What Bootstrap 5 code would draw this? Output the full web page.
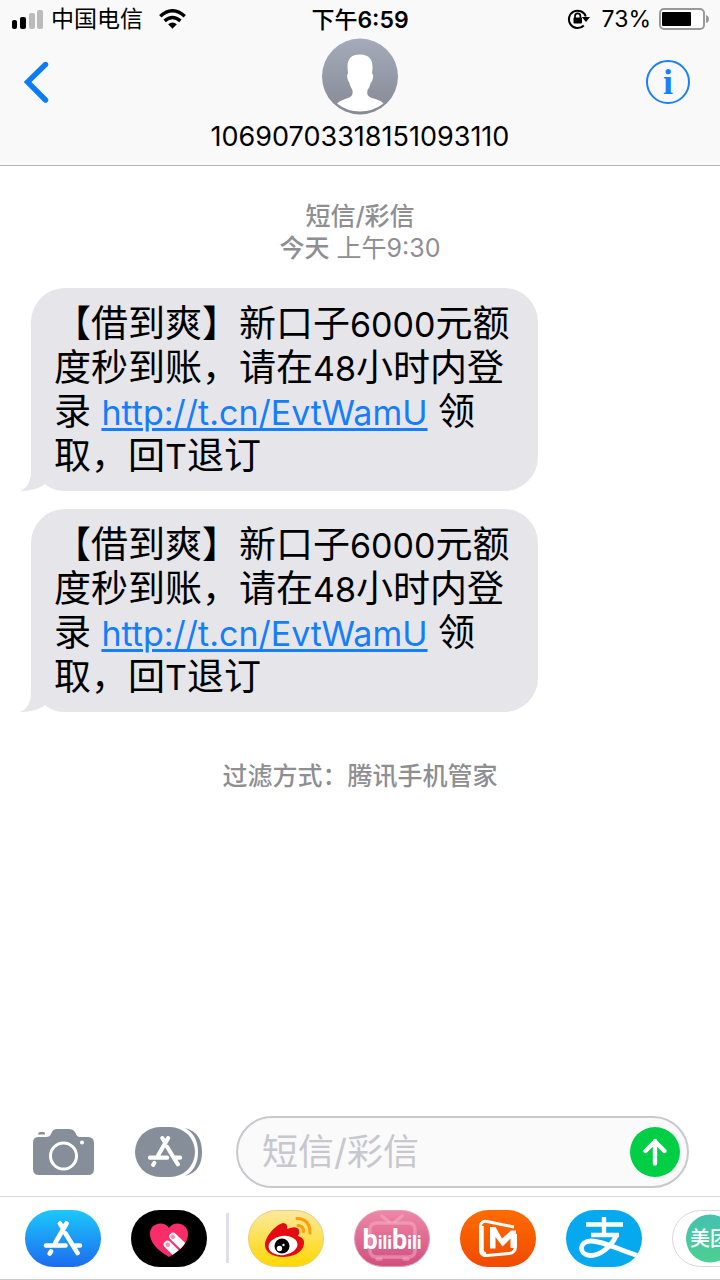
<!DOCTYPE html>
<html lang="zh-CN">
<head>
<meta charset="utf-8">
<meta name="viewport" content="width=device-width, initial-scale=1">
<title>短信</title>
<link rel="stylesheet" href="https://cdn.jsdelivr.net/npm/bootstrap@5.3.0/dist/css/bootstrap.min.css">
<style>
  body { font-family: Inter, "Noto Sans CJK SC", sans-serif; color: #000; background: #fff; }
  svg { display: block; flex: none; }
  .bare-btn { border: 0; background: none; padding: 0; flex: none; }
  .top-bar { background: #f9f9f9; border-bottom: 1px solid #b2b2b2; }
  .status-row { height: 38px; padding: 0 11px; font-size: 23px; line-height: 40px; }
  .status-row > * { flex: 1 1 0; }
  .clock { font-weight: 600; }
  .clock-cjk { font-weight: 500; }
  .nav-row { height: 127px; padding: 0 24px; }
  .nav-side { flex: 1 1 0; padding-top: 22px; }
  .info-btn { width: 44px; height: 44px; margin-right: 6px; border: 2px solid #1a80f5; border-radius: 50%; color: #1a80f5; font: 700 36px/40px "Liberation Serif", serif; }
  .sender { font-size: 27px; line-height: 32px; margin: 6px -40px 0; font-weight: 400; }
  .gray-note { color: #8e8e93; font-size: 25px; line-height: 32px; }
  .medium-text { font-weight: 500; }
  .thread { padding: 34px 31px 0; }
  .bubbles { gap: 18px; }
  .bubble { position: relative; width: 507px; max-width: 100%; background: #e5e5ea; border-radius: 34px; padding: 14px 24px 13px 23px; font-size: 37px; line-height: 44px; }
  .bubble .western { font-size: 34px; line-height: 1; }
  .bubble a { color: #157efb; text-decoration: underline; text-decoration-thickness: 3px; text-underline-offset: 3px; }
  .tail { position: absolute; left: -11px; bottom: 0; }
  .compose { padding: 0 31px 8px 32px; }
  .apps-btn { margin-left: 40px; }
  .field { min-width: 0; height: 72px; border: 2px solid #c8c8cd; border-radius: 36px; background: #fafafa; padding: 0 7px 0 24px; margin-left: 33px; }
  .field input { width: 0; min-width: 0; border: 0; outline: 0; background: none; font-size: 36px; padding: 0; font-weight: 400; }
  .field input::placeholder { color: #c7c7cd; opacity: 1; }
  .app-strip { border-top: 1px solid #dcdcde; border-bottom: 1px solid #ccc; height: 84px; padding-left: 25px; gap: 30px; overflow: hidden; }
  .strip-rule { width: 3px; height: 50px; background: #dfdfea; margin: 0 -11px; flex: none; }
</style>
</head>
<body>
<svg width="0" height="0" class="position-absolute" aria-hidden="true">
  <defs>
    <symbol id="appstore" viewBox="0 0 40 36">
      <g fill="none" stroke="currentColor" stroke-width="4.6" stroke-linecap="round">
        <path d="M17 3.5 20.400 9M23.500 3.500 12.500 22.500M22.500 13.500 34.500 33M3 25.500H22.500M31.500 25.500H37M8 31.500 6.700 33.600"/>
      </g>
    </symbol>
    <linearGradient id="gAvatar" x2="0" y2="1"><stop stop-color="#a5abba"/><stop offset="1" stop-color="#858994"/></linearGradient>
    <linearGradient id="gStore" x2="0" y2="1"><stop stop-color="#1cc8fb"/><stop offset="1" stop-color="#1d6bf0"/></linearGradient>
    <linearGradient id="gWeibo" x2="0" y2="1"><stop stop-color="#fbe9a0"/><stop offset="1" stop-color="#ffd800"/></linearGradient>
    <linearGradient id="gBili" x2="0" y2="1"><stop stop-color="#ef87a8"/><stop offset="1" stop-color="#d04f7c"/></linearGradient>
    <linearGradient id="gMango" x2="0" y2="1"><stop stop-color="#ff6b00"/><stop offset="1" stop-color="#f04a00"/></linearGradient>
    <linearGradient id="gMeituan" x2="0" y2="1"><stop stop-color="#45c1b0"/><stop offset="1" stop-color="#4cd092"/></linearGradient>
    <clipPath id="pill"><rect width="76" height="57" rx="28.500"/></clipPath>
    <clipPath id="heart"><path d="M38 47Q19 36 19 23.500C19 13 33 10 38 18C43 10 57 13 57 24Q57 36 38 47Z"/></clipPath>
  </defs>
</svg>

<div class="d-flex flex-column min-vh-100">
  <header class="top-bar">
    <div class="status-row d-flex">
      <div class="d-flex align-items-center">
        <svg width="32" height="20" viewBox="0 0 32 20"><rect x="1" y="11" width="5" height="9" rx="2"/><rect x="9" y="8" width="6" height="12" rx="2"/><g fill="#bbb"><rect x="18" y="4" width="6" height="16" rx="2"/><rect x="26" y="1" width="6" height="19" rx="2"/></g></svg>
        <span class="ms-2">中国电信</span>
        <svg class="ms-3" width="27" height="20" viewBox="0 0 28 20"><g fill="none" stroke="#000" stroke-width="3.600"><path d="M1.300 7.200Q14-4.200 26.700 7.200"/><path d="M5.800 12Q14 4.800 22.200 12"/></g><path d="M9.500 15.400Q14 11.600 18.500 15.400L14 20Z"/></svg>
      </div>
      <div class="clock text-center"><span class="clock-cjk">下午</span>6:59</div>
      <div class="d-flex align-items-center justify-content-end">
        <svg width="23" height="22" viewBox="0 0 23 22"><path d="M16.800 17.500A8.700 8.700 0 1 1 18.800 8.500" fill="none" stroke="#000" stroke-width="2"/><path d="M14.800 9H23L19 14Z"/><rect x="6.500" y="9.500" width="8.500" height="6" rx="1"/><path d="M8 10V8a2.700 2.700 0 0 1 5.400 0v2" fill="none" stroke="#000" stroke-width="1.700"/></svg>
        <span class="ms-2 ps-1">73%</span>
        <svg class="ms-2" width="50" height="22" viewBox="0 0 50 22"><rect x="1" y="1" width="44" height="20" rx="4" fill="#fff" stroke="#999" stroke-width="2"/><rect x="3" y="4" width="29" height="14" rx="1"/><path d="M47 7q3 1 3 4t-3 4z" fill="#999"/></svg>
      </div>
    </div>
    <div class="nav-row d-flex">
      <div class="nav-side">
        <button class="bare-btn" type="button" aria-label="返回"><svg width="26" height="44" viewBox="0 0 26 44"><path d="M21.500 4.500 3.500 22 21.500 40" fill="none" stroke="#0a7cfa" stroke-width="5.400" stroke-linecap="round" stroke-linejoin="miter"/></svg></button>
      </div>
      <div class="d-flex flex-column align-items-center">
        <svg width="76" height="77" viewBox="0 0 76 76"><circle cx="38" cy="38" r="38" fill="url(#gAvatar)"/><path d="M38 16C47 16 51 21 50.500 30L50 35Q52 36 50.800 40Q50 44 48.700 44C48 49 46 50 45.500 52C44.500 56 46 58 50 59.500C55 61 59 62 61.500 65Q51 73 38 73T15 65C18 62 22 61 26 59.500C30 58 31 56 30.500 52C30 50 28 48 27.300 44Q26 43 25.500 40Q24.500 36 26 35L25.500 29C25.500 20 29 16 38 16Z" fill="#fff"/></svg>
        <h1 class="sender">10690703318151093110</h1>
      </div>
      <div class="nav-side text-end">
        <button class="bare-btn info-btn text-center" type="button" aria-label="详细信息">i</button>
      </div>
    </div>
  </header>

  <main class="thread flex-grow-1">
    <div class="gray-note text-center"><div class="medium-text">短信/彩信</div><div><span class="medium-text">今天</span> 上午9:30</div></div>
    <div class="bubbles d-flex flex-column mt-4">
      <div class="bubble">【借到爽】新口子<span class="western">6000</span>元额度秒到账，请在<span class="western">48</span>小时内登录 <a class="western" href="#">http://t.cn/EvtWamU</a> 领取，回<span class="western">T</span>退订
        <svg class="tail" width="26" height="34" viewBox="0 0 26 34"><path d="M11 0V15C11 25 7 31 0 34Q14 34 24 28L26 10Z" fill="#e5e5ea"/></svg></div>
      <div class="bubble">【借到爽】新口子<span class="western">6000</span>元额度秒到账，请在<span class="western">48</span>小时内登录 <a class="western" href="#">http://t.cn/EvtWamU</a> 领取，回<span class="western">T</span>退订
        <svg class="tail" width="26" height="34" viewBox="0 0 26 34"><path d="M11 0V15C11 25 7 31 0 34Q14 34 24 28L26 10Z" fill="#e5e5ea"/></svg></div>
    </div>
    <p class="gray-note medium-text text-center mt-5 mb-0">过滤方式：腾讯手机管家</p>
  </main>

  <footer>
    <div class="compose d-flex align-items-center">
      <button class="bare-btn" type="button" aria-label="相机"><svg width="63" height="48" viewBox="0 0 63 48"><path fill="#868e99" d="M6 9H14Q18 9 19 6L20 4Q21 1 25 1H37Q41 1 43 4L44 6Q45 9 48 9H56Q62 9 62 15V41Q62 47 56 47H7Q1 47 1 41V15Q1 9 6 9ZM8 4H12Q13 4 13 6.500H6Q6 4 8 4Z"/><circle cx="31.500" cy="28" r="13" fill="none" stroke="#fff" stroke-width="3"/><circle cx="50" cy="14.500" r="2" fill="#fff"/></svg></button>
      <button class="bare-btn apps-btn" type="button" aria-label="应用"><svg width="68" height="50" viewBox="0 0 68 50"><rect width="60" height="50" rx="25" fill="#868e99"/><path d="M50 1C63 4 67 14 67 25S63 46 50 49Q63 42 63 25T50 1Z" fill="#868e99"/><svg x="12" y="8" width="36" height="32" color="#fff"><use href="#appstore"/></svg></svg></button>
      <div class="field d-flex align-items-center flex-grow-1">
        <input class="flex-grow-1" type="text" placeholder="短信/彩信" aria-label="短信/彩信">
        <button class="bare-btn" type="button" aria-label="发送"><svg width="50" height="50" viewBox="0 0 50 50"><circle cx="25" cy="25" r="25" fill="#00ce44"/><path d="M25 36.500V14M15.500 24 25 14.500 34.500 24" fill="none" stroke="#fff" stroke-width="4.400" stroke-linecap="round" stroke-linejoin="round"/></svg></button>
      </div>
    </div>
    <nav class="app-strip d-flex align-items-center" aria-label="应用">
      <button class="bare-btn" type="button" aria-label="App Store"><svg width="76" height="57"><rect width="76" height="57" rx="28.500" fill="url(#gStore)"/><svg x="18" y="10" width="40" height="36" color="#fff"><use href="#appstore"/></svg></svg></button>
      <button class="bare-btn" type="button" aria-label="Digital Touch"><svg width="76" height="57"><rect width="76" height="57" rx="28.500"/><g clip-path="url(#heart)"><rect width="76" height="57" fill="#fb2c6a"/><g stroke="#fff" stroke-width="7.500" stroke-linecap="round"><path d="M42 26.500 58 42M36.500 34.500 50 48"/></g><g stroke="#ff8fa8" stroke-width="4" stroke-linecap="round"><path d="M41.500 26.500 42 27M36.500 34.500 37 35"/></g></g></svg></button>
      <span class="strip-rule"></span>
      <button class="bare-btn" type="button" aria-label="微博"><svg width="76" height="57"><rect x=".5" y=".5" width="75" height="56" rx="28" fill="url(#gWeibo)" stroke="#e6cf7a"/><path d="M17 35C17 27 27 15 35 13Q40 13 39 19Q49 15 51 20Q52 23 50 26Q57 28 56 34C55 43 44 47 35 47S17 43 17 35Z" fill="#e50b12"/><ellipse cx="35" cy="35.500" rx="14.500" ry="9.500" fill="#fff" transform="rotate(-8 35 35.500)"/><circle cx="34" cy="36" r="7.500"/><circle cx="31.500" cy="38.500" r="2.700" fill="#fff"/><circle cx="35.500" cy="35" r="1.200" fill="#fff"/><g fill="none" stroke="#ff9c08" stroke-width="3" stroke-linecap="round"><path d="M49 8.500Q62 9 62 23"/><path d="M50 15.500Q56 16 55.500 21.500"/></g></svg></button>
      <button class="bare-btn" type="button" aria-label="哔哩哔哩"><svg width="76" height="57"><rect x=".5" y=".5" width="75" height="56" rx="28" fill="url(#gBili)" stroke="#e0a0b8"/><g fill="none" stroke="#f5b2c7" stroke-opacity=".5" stroke-width="3.500" stroke-linecap="round"><rect x="16" y="13" width="45" height="34" rx="6"/><path d="M28 6 35 12M48 6 41 12M23 49h4M50 49h4"/></g><text x="38" y="39" text-anchor="middle" font-family="Roboto, sans-serif" font-weight="700" font-size="18" fill="#fff"><tspan font-size="27">b</tspan>ili<tspan font-size="27">b</tspan>ili</text></svg></button>
      <button class="bare-btn" type="button" aria-label="芒果TV"><svg width="76" height="57"><rect width="76" height="57" rx="28.500" fill="url(#gMango)"/><g fill="none" stroke="#fff" stroke-linejoin="round"><path d="M54 17 27 11.500Q20.500 10.500 20.500 17V39Q20.500 46 27 45.500L49 43.500Q55.500 43 55.500 36V24" stroke-width="3"/><path d="M21.500 16V40Q21.500 44 26 44.500" stroke-width="4.500"/></g><path d="M30 17H35.500L42 28.500 51 20.500H56V38H50.500V28.500L42.500 36.500 35.500 27V38.500H30Z" fill="#fff"/></svg></button>
      <button class="bare-btn" type="button" aria-label="支付宝"><svg width="76" height="57"><g clip-path="url(#pill)"><rect width="76" height="57" fill="#07a9ee"/><g fill="none" stroke="#fff" stroke-width="4.400"><path d="M38 7V26M20 14.500H57M25 25H53"/><path d="M50.500 25C46 36 34 46 24 45.500C12 44.500 13 31 25 31C38 31 52 40 73 46" stroke-width="4.800"/></g></g></svg></button>
      <button class="bare-btn" type="button" aria-label="美团"><svg width="76" height="57"><rect x=".5" y=".5" width="75" height="56" rx="28" fill="#fff" stroke="#d8d8d8"/><circle cx="38" cy="28.500" r="24" fill="url(#gMeituan)"/><text x="38" y="36" text-anchor="middle" font-size="20" font-weight="500" fill="#fff">美团</text></svg></button>
    </nav>
  </footer>
</div>
<script src="https://cdn.jsdelivr.net/npm/bootstrap@5.3.0/dist/js/bootstrap.bundle.min.js"></script>
</body>
</html>
